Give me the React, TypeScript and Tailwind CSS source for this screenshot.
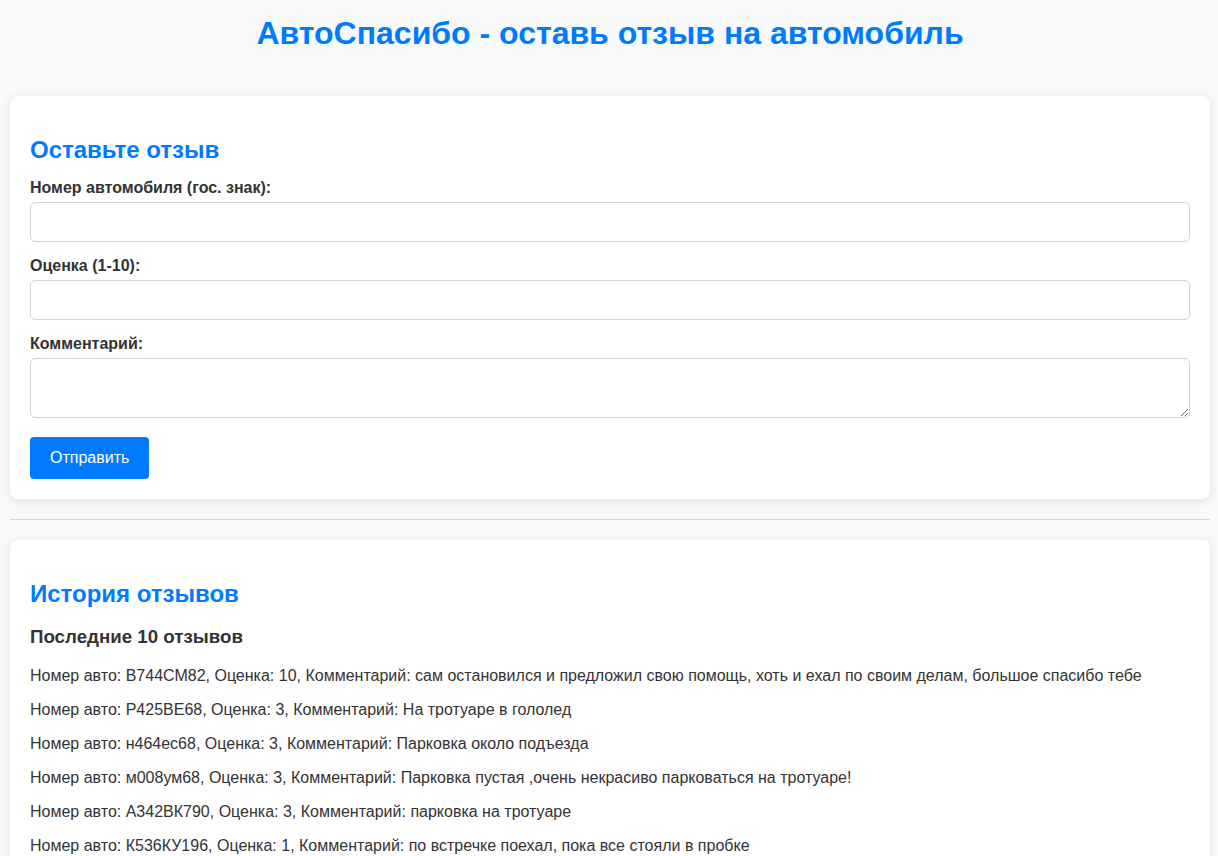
import React from "react";

const reviews = [
  "Номер авто: В744СМ82, Оценка: 10, Комментарий: сам остановился и предложил свою помощь, хоть и ехал по своим делам, большое спасибо тебе",
  "Номер авто: Р425ВЕ68, Оценка: 3, Комментарий: На тротуаре в гололед",
  "Номер авто: н464ес68, Оценка: 3, Комментарий: Парковка около подъезда",
  "Номер авто: м008ум68, Оценка: 3, Комментарий: Парковка пустая ,очень некрасиво парковаться на тротуаре!",
  "Номер авто: А342ВК790, Оценка: 3, Комментарий: парковка на тротуаре",
  "Номер авто: К536КУ196, Оценка: 1, Комментарий: по встречке поехал, пока все стояли в пробке",
];

export default function App() {
  return (
    <div className="min-h-screen bg-[#f8f9fa] pl-[10px] pr-[8px] font-['Liberation_Sans',Arial,sans-serif] text-[#333] text-[16px]">
      <header className="pt-[15px] pb-[44px]">
        <h1 className="text-center text-[32px] leading-[37px] font-bold text-[#007bff]">
          АвтоСпасибо - оставь отзыв на автомобиль
        </h1>
      </header>

      <section className="rounded-[8px] bg-white p-[20px] shadow-[0_2px_10px_rgba(0,0,0,0.1)]">
        <h2 className="mt-[20px] mb-[15px] text-[24px] leading-[27.6px] font-bold text-[#007bff]">
          Оставьте отзыв
        </h2>
        <form className="flex flex-col" onSubmit={(e) => e.preventDefault()}>
          <label className="mb-[5px] block text-[16px] leading-[18.4px] font-bold">
            Номер автомобиля (гос. знак):
          </label>
          <input
            type="text"
            className="mb-[15px] h-[40px] w-full rounded-[5px] border border-[#ced4da] bg-white px-[10px]"
          />
          <label className="mb-[5px] block text-[16px] leading-[18px] font-bold">
            Оценка (1-10):
          </label>
          <input
            type="number"
            className="mb-[15px] h-[40px] w-full rounded-[5px] border border-[#ced4da] bg-white px-[10px]"
          />
          <label className="mb-[5px] block text-[16px] leading-[18px] font-bold">
            Комментарий:
          </label>
          <textarea className="mb-[19px] block h-[60px] w-full rounded-[5px] border border-[#ced4da] bg-white px-[10px] resize-y" />
          <div>
            <button
              type="submit"
              className="h-[42px] rounded-[4px] bg-[#007bff] px-[20px] text-[16px] text-white"
            >
              Отправить
            </button>
          </div>
        </form>
      </section>

      <hr className="my-[20px] border-0 border-t border-[#d6d8db]" />

      <section className="rounded-[8px] bg-white p-[20px] shadow-[0_2px_10px_rgba(0,0,0,0.1)]">
        <h2 className="mt-[20px] mb-[18px] text-[24px] leading-[27.6px] font-bold text-[#007bff]">
          История отзывов
        </h2>
        <h3 className="mb-[20px] text-[18.72px] leading-[21.5px] font-bold text-[#333]">
          Последние 10 отзывов
        </h3>
        <div>
          {reviews.map((r, i) => (
            <p key={i} className="mb-[16px] text-[16px] leading-[18px]">
              {r}
            </p>
          ))}
        </div>
      </section>
    </div>
  );
}
